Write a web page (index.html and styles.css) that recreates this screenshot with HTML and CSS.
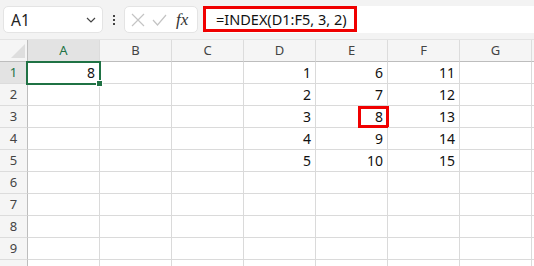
FILE: index.html
```html
<!DOCTYPE html>
<html lang="en">
<head>
  <meta charset="UTF-8">
  <title>INDEX</title>
  <link rel="stylesheet" href="styles.css">
</head>
<body>
  <div class="toolbar">
    <div class="name-box">
      <span>A1</span>
      <svg class="chevron" width="10" height="6" viewBox="0 0 10 6"><path d="M1 1l4 4 4-4" fill="none" stroke="#444" stroke-width="1.2"/></svg>
    </div>
    <div class="dots"><i></i><i></i><i></i></div>
    <div class="fx-box">
      <svg width="14" height="14" viewBox="0 0 14 14"><path d="M1 1l12 12M13 1L1 13" stroke="#c4c4c4" stroke-width="1.2"/></svg>
      <svg width="15" height="12" viewBox="0 0 15 12"><path d="M1 6l4.5 5L14 1" fill="none" stroke="#c4c4c4" stroke-width="1.2"/></svg>
      <span class="fx">fx</span>
    </div>
    <div class="formula">
      <div class="formula-text">=INDEX(D1:F5, 3, 2)</div>
    </div>
  </div>

  <div class="sheet">
    <div class="corner"></div>
    <div class="col-head active">A</div>
    <div class="col-head">B</div>
    <div class="col-head">C</div>
    <div class="col-head">D</div>
    <div class="col-head">E</div>
    <div class="col-head">F</div>
    <div class="col-head">G</div>
    <div class="col-head"></div>

    <div class="row-head active">1</div>
    <div class="cell selected">8</div><div class="cell"></div><div class="cell"></div>
    <div class="cell">1</div><div class="cell">6</div><div class="cell">11</div><div class="cell"></div><div class="cell"></div>

    <div class="row-head">2</div>
    <div class="cell"></div><div class="cell"></div><div class="cell"></div>
    <div class="cell">2</div><div class="cell">7</div><div class="cell">12</div><div class="cell"></div><div class="cell"></div>

    <div class="row-head">3</div>
    <div class="cell"></div><div class="cell"></div><div class="cell"></div>
    <div class="cell">3</div><div class="cell marked">8</div><div class="cell">13</div><div class="cell"></div><div class="cell"></div>

    <div class="row-head">4</div>
    <div class="cell"></div><div class="cell"></div><div class="cell"></div>
    <div class="cell">4</div><div class="cell">9</div><div class="cell">14</div><div class="cell"></div><div class="cell"></div>

    <div class="row-head">5</div>
    <div class="cell"></div><div class="cell"></div><div class="cell"></div>
    <div class="cell">5</div><div class="cell">10</div><div class="cell">15</div><div class="cell"></div><div class="cell"></div>

    <div class="row-head">6</div>
    <div class="cell"></div><div class="cell"></div><div class="cell"></div><div class="cell"></div><div class="cell"></div><div class="cell"></div><div class="cell"></div><div class="cell"></div>
    <div class="row-head">7</div>
    <div class="cell"></div><div class="cell"></div><div class="cell"></div><div class="cell"></div><div class="cell"></div><div class="cell"></div><div class="cell"></div><div class="cell"></div>
    <div class="row-head">8</div>
    <div class="cell"></div><div class="cell"></div><div class="cell"></div><div class="cell"></div><div class="cell"></div><div class="cell"></div><div class="cell"></div><div class="cell"></div>
    <div class="row-head">9</div>
    <div class="cell"></div><div class="cell"></div><div class="cell"></div><div class="cell"></div><div class="cell"></div><div class="cell"></div><div class="cell"></div><div class="cell"></div>
    <div class="row-head"></div>
    <div class="cell"></div><div class="cell"></div><div class="cell"></div><div class="cell"></div><div class="cell"></div><div class="cell"></div><div class="cell"></div><div class="cell"></div>
  </div>
</body>
</html>
```

FILE: styles.css
```css
/***----BASIC----***/
body {
  margin: 0;
  width: 534px;
  height: 266px;
  overflow: hidden;
  background: #fff;
  font-family: 'Noto Sans', 'Liberation Sans', sans-serif;
  color: #222;
}

/***----Toolbar----***/
.toolbar {
  height: 40px;
  box-sizing: border-box;
  background: #f3f3f3;
  border-bottom: 1px solid #e3e3e3;
  display: flex;
  align-items: flex-start;
  padding: 6px 0 0 3px;
}
.name-box {
  width: 100px;
  height: 27px;
  box-sizing: border-box;
  background: #fff;
  border: 1px solid #e4e4e4;
  border-radius: 5px;
  display: flex;
  align-items: center;
  justify-content: space-between;
  padding: 0 6px 0 7px;
  font-size: 15.5px;
  color: #222;
}
.chevron {
  margin-top: 1px;
}
.dots {
  width: 21px;
  height: 27px;
  display: flex;
  flex-direction: column;
  align-items: center;
  justify-content: center;
  gap: 2px;
}
.dots i {
  width: 2px;
  height: 2px;
  background: #444;
}
.fx-box {
  width: 74px;
  height: 27px;
  box-sizing: border-box;
  background: #fff;
  border: 1px solid #e4e4e4;
  border-radius: 5px;
  display: flex;
  align-items: center;
  gap: 7px;
  padding-left: 6px;
}
.fx {
  font-family: 'Liberation Serif', serif;
  font-style: italic;
  font-size: 17px;
  color: #333;
  margin-left: 2px;
}
.formula {
  flex: 1;
  height: 27px;
  margin-left: 5px;
  background: #fff;
  border-radius: 5px 0 0 5px;
}
.formula-text {
  width: 154px;
  height: 26px;
  box-sizing: border-box;
  border: 3px solid #f00000;
  font-size: 14.5px;
  line-height: 20px;
  padding-left: 10px;
  color: #111;
}

/***----Sheet----***/
.sheet {
  display: grid;
  grid-template-columns: 28px repeat(8, 72px);
  grid-auto-rows: 22px;
  width: 534px;
  height: 226px;
  overflow: hidden;
  font-size: 14px;
}
.sheet > div {
  box-sizing: border-box;
}
.corner {
  background: #f5f5f5;
  border-right: 1px solid #bdbdbd;
  border-bottom: 1px solid #bdbdbd;
  position: relative;
}
.corner::after {
  content: '';
  position: absolute;
  right: 2px;
  bottom: 3px;
  border-style: solid;
  border-width: 0 0 14px 14px;
  border-color: transparent transparent #dedede transparent;
}
.col-head {
  background: #f5f5f5;
  border-right: 1px solid #dcdcdc;
  border-bottom: 1px solid #bdbdbd;
  text-align: center;
  font-size: 13px;
  line-height: 21px;
  color: #444;
}
.row-head {
  background: #f5f5f5;
  border-right: 1px solid #bdbdbd;
  border-bottom: 1px solid #dcdcdc;
  text-align: center;
  font-size: 13px;
  line-height: 21px;
  color: #444;
}
.col-head.active,
.row-head.active {
  background: #e3e3e3;
  color: #217346;
}
.cell {
  border-right: 1px solid #dadada;
  border-bottom: 1px solid #dadada;
  text-align: right;
  padding-right: 4px;
  line-height: 21px;
  color: #111;
  position: relative;
}

/* active cell */
.cell.selected::after {
  content: '';
  position: absolute;
  left: -2px;
  top: -1px;
  right: -2px;
  bottom: -2px;
  border: 2px solid #1f7244;
}
.cell.selected::before {
  content: '';
  position: absolute;
  right: -4px;
  bottom: -4px;
  width: 5px;
  height: 5px;
  background: #1f7244;
  border: 1px solid #fff;
  z-index: 2;
}

/* highlighted result */
.cell.marked::after {
  content: '';
  position: absolute;
  right: -2px;
  top: 0;
  bottom: -1px;
  width: 31px;
  box-sizing: border-box;
  border: 3px solid #f00000;
}
```
